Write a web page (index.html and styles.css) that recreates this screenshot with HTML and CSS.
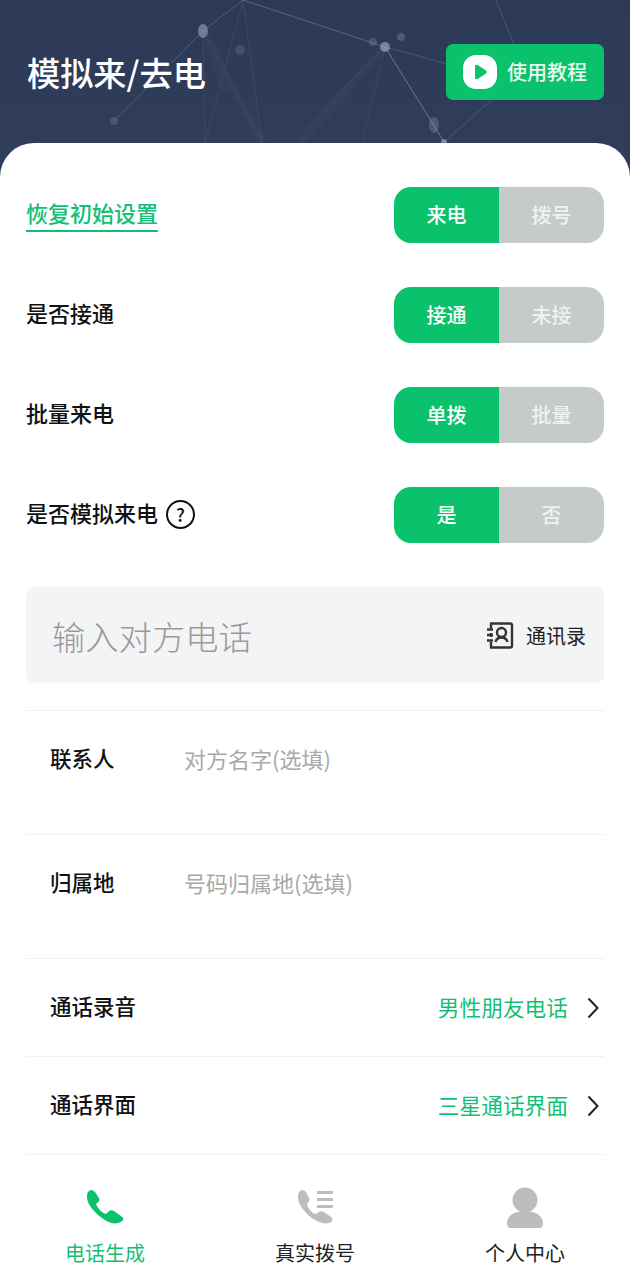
FILE: index.html
```html
<!DOCTYPE html>
<html lang="zh-CN">
<head>
    <meta charset="UTF-8">
    <meta name="viewport" content="width=device-width, initial-scale=1.0">
    <title>模拟来/去电</title>
    <link rel="stylesheet" href="styles.css">
</head>
<body>
<div class="app">
    <header class="hero">
        <svg class="hero-bg" viewBox="0 0 630 183" aria-hidden="true">
            <g stroke="#8d9ab3" fill="none">
                <path d="M243 0L203 31L114 121" stroke-opacity=".35"/>
                <path d="M243 0L385 47L444 142" stroke-opacity=".45"/>
                <path d="M203 31L205 143M243 0L205 143M243 0L262 143" stroke-opacity=".14"/>
                <path d="M203 31L262 143M385 47L290 143M385 47L362 143" stroke-opacity=".12"/>
                <path d="M444 142L520 75M385 47L470 70M496 0L520 60" stroke-opacity=".3"/>
                <path d="M385 47L434 125L444 142" stroke-opacity=".25"/>
            </g>
            <g stroke="#8d9ab3" fill="none" stroke-width="9" stroke-opacity=".04">
                <path d="M203 31L262 143M385 47L300 143M213 50L225 90"/>
            </g>
            <g fill="#98a3b8">
                <ellipse cx="203" cy="31" rx="5" ry="7" fill-opacity=".6"/>
                <circle cx="385" cy="47" r="5" fill-opacity=".7"/>
                <circle cx="373" cy="42" r="4" fill-opacity=".25"/>
                <circle cx="401" cy="37" r="4" fill-opacity=".3"/>
                <circle cx="240" cy="50" r="5" fill-opacity=".2"/>
                <circle cx="114" cy="121" r="4" fill-opacity=".25"/>
                <ellipse cx="434" cy="125" rx="5" ry="8" fill-opacity=".3"/>
                <circle cx="444" cy="142" r="3" fill-opacity=".7"/>
            </g>
        </svg>
        <div class="hero-bar">
            <h1 class="hero-title">模拟来/去电</h1>
            <a class="guide-btn">
                <svg class="guide-icon" viewBox="0 0 34 34">
                    <rect width="34" height="34" rx="13" fill="#fff"/>
                    <path d="M12 11.500c0-1.500 1.400-2.200 2.600-1.500l8.400 5.400c1.100.7 1.100 2.400 0 3.100l-8.400 5.400c-1.200.7-2.600 0-2.600-1.500z" fill="#0ac26c"/>
                </svg>
                <span>使用教程</span>
            </a>
        </div>
    </header>

    <main class="sheet">
        <div class="option">
            <span class="option-label reset">恢复初始设置</span>
            <div class="toggle"><span class="on">来电</span><span class="off">拨号</span></div>
        </div>
        <div class="option">
            <span class="option-label">是否接通</span>
            <div class="toggle"><span class="on">接通</span><span class="off">未接</span></div>
        </div>
        <div class="option">
            <span class="option-label">批量来电</span>
            <div class="toggle"><span class="on">单拨</span><span class="off">批量</span></div>
        </div>
        <div class="option">
            <span class="option-label">是否模拟来电<i class="help">?</i></span>
            <div class="toggle"><span class="on">是</span><span class="off">否</span></div>
        </div>

        <div class="phone-box">
            <span class="phone-hint">输入对方电话</span>
            <a class="contacts">
                <svg class="contacts-icon" viewBox="0 0 28 28" fill="none" stroke="#333" stroke-width="2.400">
                    <path d="M4 2.500h20a2 2 0 0 1 2 2v20a2 2 0 0 1-2 2H4"/>
                    <path d="M5 2.500v5M5 12v4M5 21v5.500"/>
                    <path d="M1 8.500h6M1 14h6M1 19.500h6"/>
                    <circle cx="15.500" cy="11.500" r="4.500"/>
                    <path d="M9.500 21c.8-3 3-4.500 6-4.500s5.200 1.500 6 4.500"/>
                </svg>
                <span>通讯录</span>
            </a>
        </div>

        <div class="field">
            <span class="field-label">联系人</span>
            <span class="field-hint">对方名字(选填)</span>
        </div>
        <div class="field">
            <span class="field-label">归属地</span>
            <span class="field-hint">号码归属地(选填)</span>
        </div>
        <div class="link-row">
            <span class="field-label">通话录音</span>
            <span class="link-value">男性朋友电话</span>
            <svg class="chevron" viewBox="0 0 12 22"><path d="M1.500 1.500l9 9.500-9 9.500"/></svg>
        </div>
        <div class="link-row">
            <span class="field-label">通话界面</span>
            <span class="link-value">三星通话界面</span>
            <svg class="chevron" viewBox="0 0 12 22"><path d="M1.500 1.500l9 9.500-9 9.500"/></svg>
        </div>
    </main>

    <nav class="tabs">
        <a class="tab active">
            <svg class="tab-icon" viewBox="0 0 60 55"><path fill="#0ac26c" d="M14 11C16 9 18 10 20 12L24 18C25 20 24 22 22 23L21 24C23 29 27 33 31 34L33 32C35 30 37 30 39 31L46 36C49 38 49 40 47 41C42 45 34 44 27 38C19 32 12 24 12 17C12 14 12.500 12 14 11Z"/></svg>
            <span>电话生成</span>
        </a>
        <a class="tab">
            <svg class="tab-icon" viewBox="0 0 60 55">
                <path fill="#bdbdbd" d="M15 11C17 9 19 10 21 12L24 18C25 20 24 22 22.500 23L22 24C23 29 27 33 31 34L33 32.500C35 31 37 31 39 32L46 37C48 39 48 41 46 42C41 45 34 43 27 38C19 32 13 24 13 17C13 14 13.500 12 15 11Z"/>
                <path fill="#bdbdbd" d="M32 11h16v3H32zM32 18h16v3H32zM32 25h16v3H32z"/>
            </svg>
            <span>真实拨号</span>
        </a>
        <a class="tab">
            <svg class="tab-icon" viewBox="0 0 60 55">
                <circle cx="30" cy="20" r="12.500" fill="#bdbdbd"/>
                <path fill="#bdbdbd" d="M12 43C12 36 19 31 30 31S48 36 48 43C48 46 47 48 44 48H16C13 48 12 46 12 43Z"/>
            </svg>
            <span>个人中心</span>
        </a>
    </nav>
</div>
</body>
</html>
```

FILE: styles.css
```css
* {
    box-sizing: border-box;
}
html, body {
    margin: 0;
    padding: 0;
}
body {
    background-color: #fff;
    font-family: "Noto Sans CJK SC", "Noto Sans", sans-serif;
    color: #111;
}
.app {
    width: 630px;
    height: 1280px;
    overflow: hidden;
    display: flex;
    flex-direction: column;
}

/* header */
.hero {
    position: relative;
    height: 183px;
    flex-shrink: 0;
    background: linear-gradient(180deg, #2c3a58 0%, #303e5c 100%);
}
.hero-bg {
    position: absolute;
    left: 0;
    top: 0;
    width: 630px;
    height: 183px;
    filter: blur(0.7px);
}
.hero-bar {
    position: relative;
    height: 143px;
    padding: 44px 26px 43px 27px;
    display: flex;
    justify-content: space-between;
    align-items: center;
}
.hero-title {
    margin: 0 0 2px;
    font-size: 33.200px;
    font-weight: 500;
    color: #fff;
}
.guide-btn {
    width: 158px;
    height: 56px;
    padding-left: 17px;
    display: flex;
    align-items: center;
    gap: 10px;
    background-color: #0ac26c;
    border-radius: 7px;
    color: #eafaf2;
    font-size: 20px;
    font-weight: 500;
}
.guide-btn span {
    margin-bottom: 2px;
}
.guide-icon {
    width: 34px;
    height: 34px;
}

/* white sheet */
.sheet {
    position: relative;
    flex: 1;
    margin-top: -40px;
    padding: 44px 26px 0;
    background-color: #fff;
    border-radius: 34px 34px 0 0;
}
.option {
    height: 56px;
    margin-bottom: 44px;
    display: flex;
    justify-content: space-between;
    align-items: center;
}
.option-label {
    display: flex;
    align-items: center;
    padding-bottom: 6px;
    font-size: 22px;
    font-weight: 500;
}
.option-label.reset {
    height: 34px;
    padding-bottom: 5px;
    color: #12bf75;
    border-bottom: 2px solid #12bf75;
}
.help {
    width: 29px;
    height: 29px;
    margin: 4px 0 0 8px;
    display: flex;
    justify-content: center;
    align-items: center;
    border: 2px solid #111;
    border-radius: 50%;
    font-size: 18px;
    font-style: normal;
    font-weight: 500;
}
.toggle {
    width: 210px;
    height: 56px;
    display: flex;
    border-radius: 17px;
    overflow: hidden;
    font-size: 20px;
    font-weight: 500;
    color: #fff;
}
.toggle span {
    width: 105px;
    padding-bottom: 2px;
    display: flex;
    justify-content: center;
    align-items: center;
}
.toggle .on {
    background-color: #0ac26c;
}
.toggle .off {
    background-color: #c5cbc9;
    color: #f0f2f1;
}

/* phone input */
.phone-box {
    height: 96px;
    padding: 0 18px 0 26px;
    display: flex;
    justify-content: space-between;
    align-items: center;
    background-color: #f3f4f6;
    border-radius: 8px;
}
.phone-hint {
    font-size: 33.300px;
    font-weight: 300;
    color: #999;
}
.contacts {
    display: flex;
    align-items: center;
    gap: 12px;
    font-size: 20px;
    color: #222;
}
.contacts-icon {
    width: 28px;
    height: 28px;
}

/* rows */
.field {
    height: 124px;
    padding: 24px 0 0 24px;
    display: flex;
    align-items: flex-start;
    border-top: 1px solid #f0f0f0;
}
.phone-box + .field {
    margin-top: 27px;
}
.field-label {
    width: 134px;
    font-size: 21.500px;
    line-height: 46px;
    font-weight: 500;
}
.field-hint {
    font-size: 22px;
    line-height: 46px;
    color: #a8a8a8;
}
.link-row {
    height: 98px;
    padding: 0 5px 3px 24px;
    display: flex;
    align-items: center;
    border-top: 1px solid #f0f0f0;
}
.link-row:last-child {
    height: 99px;
    border-bottom: 1px solid #f0f0f0;
}
.link-value {
    margin-left: auto;
    font-size: 21.700px;
    color: #12bf75;
}
.chevron {
    width: 12px;
    height: 22px;
    margin: 3px 0 0 19px;
    fill: none;
    stroke: #222;
    stroke-width: 2;
}

/* bottom tabs */
.tabs {
    height: 125px;
    flex-shrink: 0;
    display: grid;
    grid-template-columns: repeat(3, 1fr);
}
.tab {
    padding-top: 25px;
    display: flex;
    flex-direction: column;
    align-items: center;
    font-size: 20px;
    line-height: 28px;
    color: #222;
}
.tab.active {
    color: #12bf75;
}
.tab-icon {
    width: 60px;
    height: 55px;
    margin-bottom: 4px;
}
```
